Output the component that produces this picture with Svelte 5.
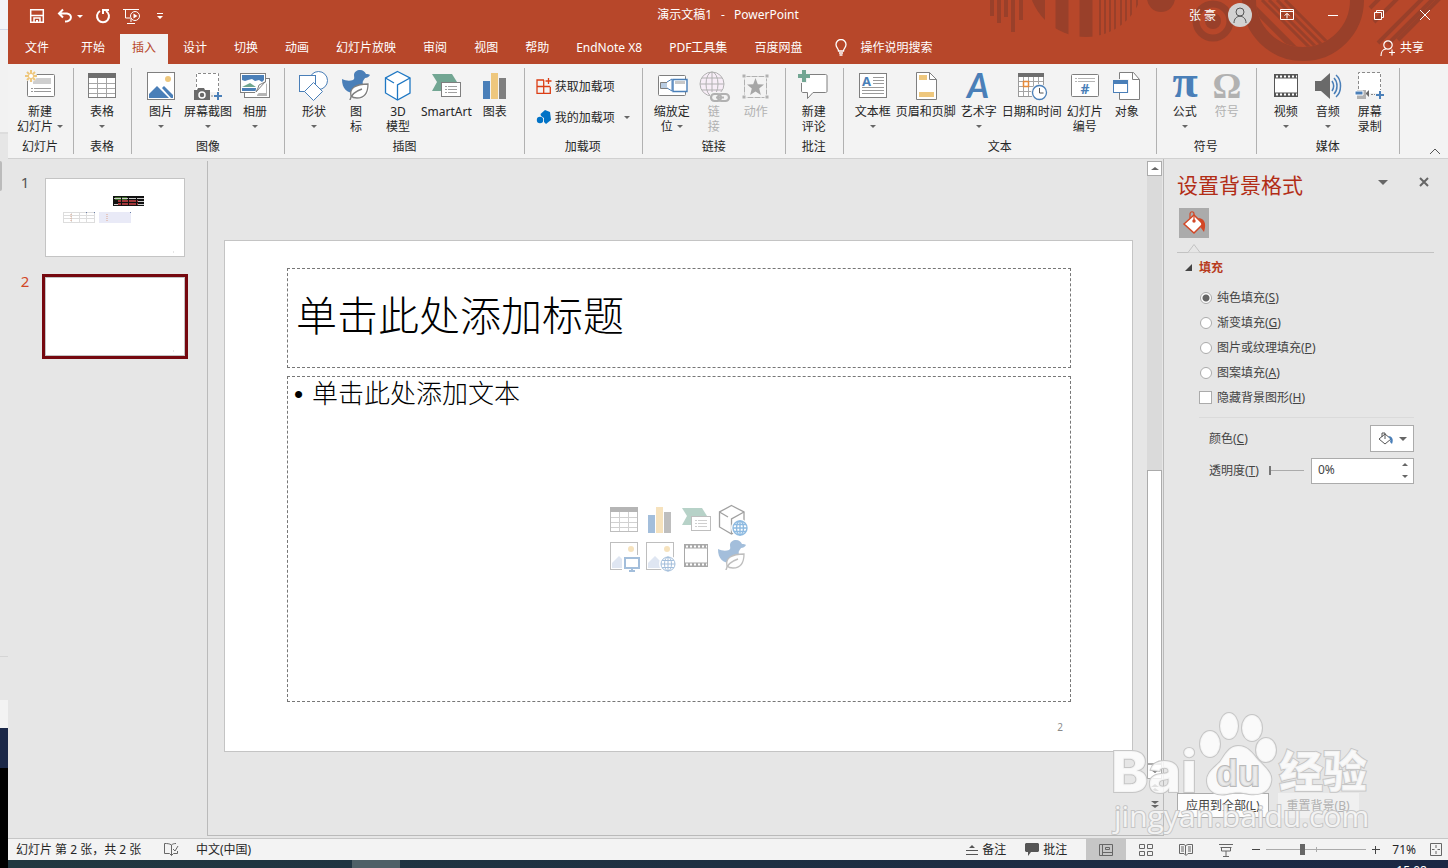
<script>
  const tabs = ['文件', '开始', '插入', '设计', '切换', '动画', '幻灯片放映', '审阅', '视图', '帮助', 'EndNote X8', 'PDF工具集', '百度网盘'];
  let activeTab = $state('插入');

  const groups = [
    { name: '幻灯片', items: [{ icon: 'newslide', lines: ['新建', '幻灯片'], drop: true }] },
    { name: '表格', items: [{ icon: 'table', lines: ['表格'], drop: true }] },
    {
      name: '图像',
      items: [
        { icon: 'picture', lines: ['图片'], drop: true },
        { icon: 'screenshot', lines: ['屏幕截图'], drop: true },
        { icon: 'album', lines: ['相册'], drop: true }
      ]
    },
    {
      name: '插图',
      items: [
        { icon: 'shapes', lines: ['形状'], drop: true },
        { icon: 'bird', lines: ['图', '标'] },
        { icon: 'cube', lines: ['3D', '模型'] },
        { icon: 'smartart', lines: ['SmartArt'] },
        { icon: 'chart', lines: ['图表'] }
      ]
    },
    { name: '加载项', addins: true, items: [] },
    {
      name: '链接',
      items: [
        { icon: 'zoom', lines: ['缩放定', '位'], drop: true },
        { icon: 'link', lines: ['链', '接'], disabled: true },
        { icon: 'action', lines: ['动作'], disabled: true }
      ]
    },
    { name: '批注', items: [{ icon: 'comment', lines: ['新建', '评论'] }] },
    {
      name: '文本',
      items: [
        { icon: 'textbox', lines: ['文本框'], drop: true },
        { icon: 'headerfooter', lines: ['页眉和页脚'] },
        { icon: 'wordart', lines: ['艺术字'], drop: true },
        { icon: 'date', lines: ['日期和时间'] },
        { icon: 'number', lines: ['幻灯片', '编号'] },
        { icon: 'object', lines: ['对象'] }
      ]
    },
    {
      name: '符号',
      items: [
        { icon: 'pi', lines: ['公式'], drop: true },
        { icon: 'omega', lines: ['符号'], disabled: true }
      ]
    },
    {
      name: '媒体',
      items: [
        { icon: 'video', lines: ['视频'], drop: true },
        { icon: 'audio', lines: ['音频'], drop: true },
        { icon: 'record', lines: ['屏幕', '录制'] }
      ]
    }
  ];

  const placeholders = [
    ['table', '插入表格'],
    ['chart', '插入图表'],
    ['smartart', '插入 SmartArt 图形'],
    ['cubeweb', '3D 模型'],
    ['picturepc', '图片'],
    ['pictureweb', '联机图片'],
    ['video', '插入视频'],
    ['bird', '插入图标']
  ];

  const fills = [
    { id: 'solid', label: '纯色填充', key: 'S' },
    { id: 'gradient', label: '渐变填充', key: 'G' },
    { id: 'picture', label: '图片或纹理填充', key: 'P' },
    { id: 'pattern', label: '图案填充', key: 'A' }
  ];
  let fill = $state('solid');
  let hideGraphics = $state(false);
  let transparency = $state(0);
  let zoomLevel = $state(71);
</script>

{#snippet globe(cx, cy, r)}
  <g transform="translate({cx} {cy})">
    <circle {r} />
    <ellipse rx={r / 2} ry={r} />
    <path d="M0 {-r}V{r}M{-r} 0H{r}M{-r * 0.85} {-r * 0.5}H{r * 0.85}M{-r * 0.85} {r * 0.5}H{r * 0.85}" />
  </g>
{/snippet}

{#snippet icon(name)}
  <svg class="icon" viewBox="0 0 32 32" width="32" height="32" fill="none" aria-hidden="true">
    {#if name === 'newslide'}
      <rect x="3.5" y="4.5" width="27" height="22" rx="1" fill="#fff" stroke="#7f7f7f" />
      <path d="M9 8h18v6H9z" fill="#cfcfcf" />
      <path d="M7 18.5h2M10 18.5h17M7 21.5h2M10 21.5h17" stroke="#999" />
      <circle cx="7" cy="6" r="6" fill="#f3f3f3" />
      <path d="M7 0v12M1 6h12M3 2l8 8M11 2l-8 8" stroke="#eec77d" stroke-width="2" />
      <circle cx="7" cy="6" r="2" fill="#fff" />
    {:else if name === 'table'}
      <rect x="2.5" y="3.5" width="27" height="24" fill="#fff" stroke="#7f7f7f" />
      <path d="M2 3h28v5H2z" fill="#6e6e6e" />
      <path d="M3 13.5h26M3 18.5h26M3 23.5h26M11.5 8v19M20.5 8v19" stroke="#a5a5a5" />
    {:else if name === 'picture'}
      <rect x="2.5" y="2.5" width="27" height="27" fill="#fff" stroke="#7f7f7f" />
      <path d="M4 28v-4l8-8 12 12z" fill="#4a7fb8" />
      <path d="M17 18l2-2 9 9v3h-2z" fill="#4a7fb8" />
      <circle cx="23" cy="9" r="3" fill="#eec77d" />
    {:else if name === 'picturepc' || name === 'pictureweb'}
      <rect x="2.5" y="2.5" width="27" height="27" fill="#fff" stroke="#7f7f7f" />
      <path d="M4 28v-5l7-7 12 12z" fill="#c0cfe6" />
      <circle cx="23" cy="9" r="3" fill="#eec77d" />
      {#if name === 'picturepc'}
        <path d="M14 15h20v17H14z" fill="#fff" />
        <rect x="17" y="18" width="14" height="10" fill="#fff" stroke="#4a7fb8" stroke-width="2" />
        <path d="M24 28v3M21 31h6" stroke="#4a7fb8" stroke-width="2" />
      {:else}
        <circle cx="24" cy="24" r="9" fill="#fff" />
        <g stroke="#4a7fb8">{@render globe(24, 24, 7)}</g>
      {/if}
    {:else if name === 'screenshot'}
      <path d="M4 3h23v19H4z" fill="#fff" />
      <path d="M4.500 17V3.500h22V21" stroke="#8a8a8a" stroke-dasharray="3 2" />
      <path d="M2 20h3l1-2h6l1 2h5v10H2z" fill="#6a6a6a" />
      <circle cx="10" cy="25" r="3" stroke="#fff" stroke-width="1.500" />
      <path d="M19 26h2" stroke="#8a8a8a" />
      <path d="M26 22v8M22 26h8" stroke="#4a7fb8" stroke-width="2" />
    {:else if name === 'album'}
      <rect x="5.500" y="8.500" width="25" height="19" fill="#fff" stroke="#7f7f7f" />
      <path d="M18 25l10-12v13H18z" fill="#b4b4b4" />
      <rect x="1.500" y="3.500" width="25" height="19" fill="#fff" stroke="#7f7f7f" />
      <path d="M3 5h22v5l-2 2-3-2-4 1-3-2-4 1-3 1-3-1z" fill="#4a7fb8" />
      <path d="M3 17l8-4 6 4z" fill="#6fa58e" />
      <path d="M3 18h14v3H3z" fill="#4a7fb8" />
      <path d="M16 23l1-4 10-7v11z" fill="#fff" />
      <path d="M17 22l9-10-6 3-1 3z" stroke="#7f7f7f" />
    {:else if name === 'shapes'}
      <circle cx="20.500" cy="10.500" r="9" fill="#fff" stroke="#4a7fb8" />
      <rect x="1.500" y="5.500" width="16" height="16" fill="#fff" stroke="#4a7fb8" />
      <path d="M15.500 12.500l9 9-9 9-9-9z" fill="#fff" stroke="#4a7fb8" />
    {:else if name === 'bird'}
      <path d="M2 9c4 2 8 2 11 1 2-1 1-3 1-5 0-3 3-5 6-5s5 2 6 4c2 0 3 0 4 1-1 2-3 3-5 3-1 2-3 3-2 6 1 5-3 9-8 9C7 23 2 19 2 9z" fill="#4a7fb8" />
      <path d="M10 30c-1-10 4-16 20-17 0 10-4 16-12 16-3 0-5-1-6-3z" fill="#fff" />
      <path d="M11 26c-2-8 5-12 17-12 0 9-4 14-11 14-3 0-5-1-6-2z" fill="#fff" stroke="#7f7f7f" stroke-width="1.300" />
      <path d="M10 30c1-6 6-9 12-11" stroke="#7f7f7f" stroke-width="1.500" />
    {:else if name === 'cube'}
      <path d="M15.500 1.500L28 8v15l-12.500 7L3.500 23V8z" fill="#fff" stroke="#1f78c4" stroke-width="1.300" />
      <path d="M3.500 8L12 13M28 8l-12.500 7v15" stroke="#1f78c4" stroke-width="1.300" />
    {:else if name === 'cubeweb'}
      <path d="M15.500 1.500L28 8v15l-12.500 7L3.500 23V8z" fill="#fff" stroke="#444" stroke-width="1.300" />
      <path d="M3.500 8L12 13M28 8l-12.500 7v15" stroke="#444" stroke-width="1.300" />
      <circle cx="24" cy="24" r="9" fill="#fff" />
      <g stroke="#1f78c4" stroke-width="1.400">{@render globe(24, 24, 7)}</g>
    {:else if name === 'smartart'}
      <path d="M2 4h20l5 8H12v9H2l5-9z" fill="#72a693" />
      <rect x="11.500" y="12.500" width="19" height="14" fill="#fff" stroke="#7f7f7f" />
      <path d="M15 16.500h2M18 16.500h9M15 19.500h2M18 19.500h9M15 22.500h2M18 22.500h9" stroke="#a0a0a0" />
    {:else if name === 'chart'}
      <path d="M4 11h7v18H4z" fill="#4a7fb8" />
      <path d="M12 3h7v26h-7z" fill="#eec77d" />
      <path d="M20 8h7v21h-7z" fill="#7f7f7f" />
    {:else if name === 'zoom'}
      <rect x="2.500" y="5.500" width="27" height="20" rx="1" fill="#fff" stroke="#7f7f7f" />
      <path d="M4.500 12.500h7v6h-7z" fill="#b9cde3" stroke="#7f7f7f" />
      <path d="M11 12l5-3v12l-5-3" fill="#fff" stroke="#4a7fb8" />
      <path d="M17 9.500h14v12H17z" fill="#fff" stroke="#4a7fb8" stroke-width="1.400" />
      <path d="M19 11h10v3H19z" fill="#c8c8c8" />
    {:else if name === 'link'}
      <circle cx="14" cy="14" r="12" fill="#f7edf7" />
      <g stroke="#b1b1b1">{@render globe(14, 14, 12)}</g>
      <path d="M12 22h20v10H12z" fill="#f3f3f3" />
      <rect x="13" y="24" width="10" height="7" rx="3.500" stroke="#b1b1b1" stroke-width="2.200" />
      <rect x="20" y="24" width="11" height="7" rx="3.500" stroke="#b1b1b1" stroke-width="2.200" />
      <path d="M18 27.500h8" stroke="#b1b1b1" stroke-width="2" />
    {:else if name === 'action'}
      <rect x="4.500" y="6.500" width="22" height="21" stroke="#b1b1b1" stroke-dasharray="6 1" />
      <path d="M2 4h4v4H2zM25 4h4v4h-4zM2 25h4v4H2zM25 25h4v4h-4z" fill="#b1b1b1" stroke="#f3f3f3" />
      <path d="M15.500 8l2.300 6.200 6.200.3-4.800 4 1.700 6.500-5.400-3.600-5.400 3.600 1.700-6.500-4.800-4 6.200-.3z" fill="#a6a6a6" />
    {:else if name === 'comment'}
      <path d="M3.500 5.500c0-.6.400-1 1-1h23c1 0 1.500.5 1.500 1.500v15c0 1-.5 1.500-1.500 1.500H15l-5.500 6v-6H5c-1 0-1.500-.5-1.500-1.500z" fill="#fff" stroke="#7f7f7f" />
      <path d="M-1-1h13v9.500H9V13H-1z" fill="#f3f3f3" />
      <path d="M6 0v12M0 6h12" stroke="#72a693" stroke-width="4" />
    {:else if name === 'textbox'}
      <rect x="2.500" y="3.500" width="27" height="24" fill="#fff" stroke="#7f7f7f" />
      <text x="5" y="16" font-size="13" font-weight="bold" fill="#4a7fb8">A</text>
      <path d="M16 7.500h11M16 10.500h11M16 13.500h11M5 17.500h22M5 20.500h22M5 23.500h22" stroke="#9a9a9a" />
    {:else if name === 'headerfooter'}
      <path d="M6.500 2.500h13l7 7v20h-20z" fill="#fff" stroke="#7f7f7f" />
      <path d="M19.500 2.500v7h7" stroke="#7f7f7f" />
      <path d="M9 5h8v5H9zM9 22h15v5H9z" fill="#eec77d" />
    {:else if name === 'wordart'}
      <text class="art" x="4" y="28" font-size="34" fill="#4a7fb8">A</text>
    {:else if name === 'date'}
      <rect x="2.500" y="3.500" width="25" height="23" fill="#fff" stroke="#9a9a9a" />
      <path d="M2 3h26v4H2z" fill="#6e6e6e" />
      <path d="M3 11.500h24M3 16.500h24M3 21.500h24M7.500 7v19M12.500 7v19M17.500 7v19M22.500 7v19" stroke="#a5a5a5" />
      <rect x="7.500" y="11.500" width="5" height="5" fill="#fff" stroke="#e58a3a" stroke-width="1.500" />
      <circle cx="23.500" cy="22.500" r="8.500" fill="#f3f3f3" />
      <circle cx="23.500" cy="22.500" r="7" fill="#fff" stroke="#4a7fb8" stroke-width="1.300" />
      <path d="M23.500 18v5h4" stroke="#555" />
    {:else if name === 'number'}
      <rect x="2.500" y="4.500" width="27" height="22" rx="1" fill="#fff" stroke="#7f7f7f" />
      <path d="M6 8.500h2M9 8.500h17M6 11.500h2M9 11.500h17" stroke="#b5b5b5" />
      <text x="11.500" y="24" font-size="14" font-weight="bold" fill="#4a7fb8">#</text>
    {:else if name === 'object'}
      <path d="M8.500 2.500h14l6 7v20h-20z" fill="#fff" stroke="#7f7f7f" />
      <path d="M21.500 2.500v7h7" stroke="#7f7f7f" />
      <path d="M1 9h17v14H1z" fill="#f3f3f3" />
      <path d="M2 10h15v13H2z" fill="#4a7fb8" />
      <path d="M3 14h13v8H3z" fill="#fff" />
    {:else if name === 'pi'}
      <text class="glyph" x="16" y="27" font-size="46" fill="#4a7fb8">π</text>
    {:else if name === 'omega'}
      <text class="glyph" x="16" y="28" font-size="36" fill="#b1b1b1">Ω</text>
    {:else if name === 'video'}
      <rect x="4.500" y="4.500" width="23" height="22" fill="#fff" stroke="#555" />
      <path d="M4 6.500h24M4 24.500h24" stroke="#555" stroke-width="4" />
      <path d="M6 6.500h21M6 24.500h21" stroke="#fff" stroke-width="2" stroke-dasharray="2 2" />
    {:else if name === 'audio'}
      <path d="M3 11h6l9-8v26l-9-8H3z" fill="#6a6a6a" />
      <path d="M20 11c2 3 2 7 0 10M22 8c4 4 4 12 0 16M24 5c6 5 6 17 0 22" stroke="#4a7fb8" stroke-width="1.500" />
    {:else if name === 'record'}
      <path d="M5 3h22v20H5z" fill="#fff" />
      <path d="M4.500 19V2.500h22V20" stroke="#8a8a8a" stroke-dasharray="3 2" />
      <path d="M3 20h9v9H3z" fill="#b1b1b1" />
      <path d="M1 21h8v4H1z" fill="#4a7fb8" stroke="#fff" />
      <path d="M12 23l3-3v7l-3-3z" fill="#6a6a6a" />
      <path d="M17 24.500h4" stroke="#8a8a8a" stroke-dasharray="2 1" />
      <path d="M26 21v8M22 25h8" stroke="#4a7fb8" stroke-width="2" />
    {/if}
  </svg>
{/snippet}

<svelte:head>
  <title>演示文稿1 - PowerPoint</title>
</svelte:head>

<div class="desktop">
  <div class="behind"></div>

  <div class="app">
    <header>
      <svg class="pattern" width="460" height="64" viewBox="988 0 460 64" fill="none" aria-hidden="true">
        <defs>
          <clipPath id="disc"><circle cx="1086" cy="-21" r="58" /></clipPath>
          <clipPath id="ring"><circle cx="1303" cy="0" r="47" /></clipPath>
        </defs>
        <path d="M992 0v16M999 0v23M1006 0v17M1013 0v32M1021 0v20" stroke="#99402a" stroke-width="4" />
        <g clip-path="url(#disc)" stroke="#99402a">
          <path d="M1034-10v40" stroke-width="22" />
          <path d="M1062 0v40M1086 0v40" stroke-width="13" />
          <path d="M1100 0v40M1105 0v40M1110 0v40M1115 0v40M1121 0v40M1126 0v40M1131 0v40M1137 0v40" stroke-width="2" />
        </g>
        <circle cx="1161" cy="-2" r="14" fill="#99402a" />
        <circle cx="1213" cy="21" r="17" stroke="#99402a" stroke-width="7" />
        <circle cx="1213" cy="21" r="8" fill="#99402a" />
        <circle cx="1303" cy="0" r="54" stroke="#99402a" stroke-width="14" />
        <g clip-path="url(#ring)" stroke="#99402a">
          <path d="M1250 4l60 60" stroke-width="6" />
          <path d="M1262 0l60 60M1269 0l60 60M1277 0l60 60M1285 0l60 60" stroke-width="3" />
        </g>
        <path d="M1370 8l20-20M1374 22l28-28M1378 43l46-46M1388 44l48-48M1398 40l48-48" stroke="#99402a" stroke-width="4" />
      </svg>

      <div class="titlebar">
        <div class="quick">
          <button aria-label="保存">
            <svg width="16" height="16" viewBox="0 0 16 16" fill="none" stroke="#fff" stroke-width="1.500"><path d="M1.700 1.700h12.600v12.600H1.700zM2 7.500h12M5 14v-4h6v4" /><path d="M7 12h2v2H7z" fill="#fff" stroke="none" /></svg>
          </button>
          <button class="split" aria-label="撤消">
            <svg width="16" height="16" viewBox="0 0 16 16" fill="none" stroke="#fff" stroke-width="2"><path d="M6 1.500L2 5.500l4 4M2 5.500h8c6 1 5 8-2 8" /></svg>
            <i class="caret"></i>
          </button>
          <button aria-label="重复">
            <svg width="16" height="16" viewBox="0 0 16 16" fill="none" stroke="#fff" stroke-width="2"><path d="M5 3a6 6 0 1 0 6 0M8 6V2h6" /></svg>
          </button>
          <button aria-label="从头开始">
            <svg width="18" height="16" viewBox="0 0 18 16" fill="none" stroke="#fff"><path d="M0 1.500h16M2.500 2v8H7M8 10v4M4 15.500h8" /><circle cx="12" cy="8" r="4.500" /><path d="M10.500 5.500l4 2.500-4 2.500z" fill="#fff" stroke="none" /></svg>
          </button>
          <button aria-label="自定义快速访问工具栏">
            <svg width="6" height="8" viewBox="0 0 6 8"><path d="M0 1h6v1H0zM0 4h6L3 7z" fill="#fff" /></svg>
          </button>
        </div>
        <h1><span>演示文稿1</span><span>-</span><span>PowerPoint</span></h1>
        <div class="window">
          <span>张 豪</span>
          <svg class="avatar" width="24" height="24" viewBox="0 0 24 24" fill="none" stroke="#555"><circle cx="12" cy="12" r="12" fill="#d2d2d2" stroke="none" /><circle cx="12" cy="9" r="4" /><path d="M6 20c0-9 12-9 12 0" /></svg>
          <button aria-label="功能区显示选项">
            <svg width="14" height="12" viewBox="0 0 14 12" fill="none" stroke="#fff"><path d="M.5.500h13v10H.5zM1 2.500h12M7 9.500v-5M4.500 6.500L7 4.500l2.500 2" /></svg>
          </button>
          <button aria-label="最小化">
            <svg width="10" height="10" viewBox="0 0 10 10" stroke="#fff"><path d="M0 5.500h10" /></svg>
          </button>
          <button aria-label="还原">
            <svg width="10" height="10" viewBox="0 0 10 10" fill="none" stroke="#fff"><path d="M.5 2.500h7v7h-7zM2.500 2V.500h7v7H8" /></svg>
          </button>
          <button aria-label="关闭">
            <svg width="10" height="10" viewBox="0 0 10 10" stroke="#fff"><path d="M0 0l10 10M10 0L0 10" /></svg>
          </button>
        </div>
      </div>

      <nav>
        {#each tabs as tab}
          <button class="tab" class:active={tab === activeTab} onclick={() => (activeTab = tab)}>{tab}</button>
        {/each}
        <button class="tellme">
          <svg width="12" height="17" viewBox="0 0 12 17" fill="none" stroke="#fff" stroke-width="1.300"><path d="M3.500 12c0-3-2.500-3-2.500-6.500a5 5 0 0 1 10 0C11 9 8.500 9 8.500 12zM4 14h4M4.500 16h3" /></svg>
          操作说明搜索
        </button>
        <button class="share">
          <svg width="16" height="16" viewBox="0 0 16 16" fill="none" stroke="#fff" stroke-width="1.200"><circle cx="8" cy="5" r="4.200" /><path d="M1 16c0-4 2-7 5-7M12 9.500v6M9 12.500h6" /></svg>
          共享
        </button>
      </nav>
    </header>

    <section class="ribbon">
      {#each groups as group}
        <div class="group" class:wide={group.items.length > 2}>
          {#if group.addins}
            <div class="addins">
              <button>
                <svg width="16" height="16" viewBox="0 0 16 16" fill="none" stroke="#dc3e15" stroke-width="1.300"><path d="M8 2H1v13.300h13.300V9M1 8.500h13.300M7.700 2v13M12.500 0v6M9.500 3h6" /></svg>
                获取加载项
              </button>
              <button>
                <svg width="16" height="16" viewBox="0 0 16 16" fill="#0072c6"><path d="M4.500 5L9 1l5 2 1 8-5 4-2-2V9L5 7z" /><circle cx="4" cy="11" r="3.200" /></svg>
                我的加载项
                <i class="caret"></i>
              </button>
            </div>
          {:else}
            <div class="items">
              {#each group.items as item}
                <button class="item" disabled={item.disabled}>
                  {@render icon(item.icon)}
                  <span>{item.lines[0]}</span>
                  <span>{item.lines[1] ?? ''}{#if item.drop}<i class="caret" class:after={item.lines[1]}></i>{/if}</span>
                </button>
              {/each}
            </div>
          {/if}
          <div class="group-name">{group.name}</div>
        </div>
      {/each}
      <button class="collapse" aria-label="折叠功能区">
        <svg width="12" height="7" viewBox="0 0 12 7" fill="none" stroke="#555"><path d="M1 6l5-5 5 5" /></svg>
      </button>
    </section>

    <main>
      <aside class="thumbs">
        <div class="thumb">
          <span>1</span>
          <button aria-label="幻灯片 1">
            <svg width="138" height="77" viewBox="46 179 138 77">
              <path d="M113 196h31v10h-31z" fill="#111" />
              <path d="M115 197h12v3h-12z" fill="#3d6a28" />
              <path d="M118 200h20v5h-20z" fill="#a3373a" />
              <path d="M114 198.500h30M138 201.500h6M138 204.500h6M114 204.500h4" stroke="#ccc" />
              <path d="M113 202.500h31M121.500 196v10M128.500 196v10M136.500 196v10" stroke="#111" />
              <path d="M63 212.500h32M63 215.500h32M63 218.500h32M63 222.500h32M63.500 212v10M71.500 212v10M79.500 212v10M86.500 212v10M94.500 212v10" stroke="#ddd" fill="none" />
              <path d="M99 212h32v11H99z" fill="#e9eaf7" />
              <path d="M71 214v8M107 214v8" stroke="#dda58c" stroke-dasharray="1 1" />
              <path d="M94 212.500h1M130 212.500h1M86 212.500h1" stroke="#6c7fa8" />
              <path d="M173 252h1" stroke="#ccc" />
            </svg>
          </button>
        </div>
        <div class="thumb selected">
          <span>2</span>
          <button aria-label="幻灯片 2">
            <svg width="138" height="77" viewBox="46 179 138 77"><path d="M173 252h1" stroke="#ccc" /></svg>
          </button>
        </div>
      </aside>

      <div class="editor">
        <div class="canvas">
          <article class="slide">
            <h2 class="holder">单击此处添加标题</h2>
            <div class="holder body">
              <ul><li>单击此处添加文本</li></ul>
              <div class="inserts">
                {#each placeholders as [name, label]}
                  <button aria-label={label}>{@render icon(name)}</button>
                {/each}
              </div>
            </div>
            <footer>2</footer>
          </article>
        </div>
        <div class="scroll">
          <button class="boxed" aria-label="向上滚动"><i class="caret up"></i></button>
          <div class="track"><div class="grip"></div></div>
          <button class="boxed" aria-label="向下滚动"><i class="caret"></i></button>
          <button class="jump" aria-label="上一张幻灯片"><i class="caret up"></i><i class="caret up"></i></button>
          <button class="jump" aria-label="下一张幻灯片"><i class="caret"></i><i class="caret"></i></button>
        </div>
      </div>

      <aside class="pane">
        <div class="pane-head">
          <h2>设置背景格式</h2>
          <button aria-label="任务窗格选项"><i class="caret big"></i></button>
          <button aria-label="关闭窗格">
            <svg width="10" height="10" viewBox="0 0 10 10" stroke="#666" stroke-width="2"><path d="M1 1l8 8M9 1L1 9" /></svg>
          </button>
        </div>
        <button class="bucket" aria-label="填充">
          <svg width="26" height="26" viewBox="0 0 26 26" fill="none"><path d="M3 14l10-9 9 9-9 9z" fill="#fff" stroke="#d24726" stroke-width="1.500" /><path d="M9 8V4c0-3 4-3 4 0v7" stroke="#d24726" stroke-width="1.200" /><circle cx="13" cy="11" r="1.700" fill="#d24726" /><path d="M17 8c6 0 9 5 6 14l-3-4c1-4 0-7-3-10z" fill="#d24726" /></svg>
        </button>
        <div class="rule">
          <svg width="14" height="9" viewBox="0 0 14 9" fill="#e6e6e6" stroke="#c2c2c2"><path d="M0 8.500h1l6-8 6 8h1" /></svg>
        </div>
        <h3><svg width="7" height="7" viewBox="0 0 7 7"><path d="M7 0v7H0z" fill="#444" /></svg>填充</h3>
        <div class="options">
          {#each fills as option}
            <label><input type="radio" name="fill" value={option.id} bind:group={fill} /><span>{option.label}(<u>{option.key}</u>)</span></label>
          {/each}
          <label><input type="checkbox" bind:checked={hideGraphics} /><span>隐藏背景图形(<u>H</u>)</span></label>
        </div>
        <div class="settings">
          <div class="row">
            <span>颜色(<u>C</u>)</span>
            <button class="color" aria-label="颜色">
              <svg width="16" height="14" viewBox="0 0 16 14" fill="none"><path d="M1 7l6-5 6 5-6 5zM4 5V1h3v6" stroke="#555" fill="#fff" /><path d="M10 4c4 0 6 3 4 8l-2-2c1-2 0-4-2-6z" fill="#4a7fb8" /></svg>
              <i class="caret big"></i>
            </button>
          </div>
          <div class="row">
            <label for="transparency">透明度(<u>T</u>)</label>
            <input id="transparency" class="slider" type="range" min="0" max="100" bind:value={transparency} />
            <div class="spin">
              <input type="text" aria-label="透明度百分比" value="{transparency}%" />
              <div>
                <button aria-label="增加" onclick={() => (transparency = Math.min(100, transparency + 1))}><i class="caret up"></i></button>
                <button aria-label="减少" onclick={() => (transparency = Math.max(0, transparency - 1))}><i class="caret"></i></button>
              </div>
            </div>
          </div>
        </div>
        <div class="actions">
          <button>应用到全部(<u>L</u>)</button>
          <button disabled>重置背景(<u>B</u>)</button>
        </div>
      </aside>
    </main>

    <div class="status">
      <span class="count">幻灯片 第 2 张，共 2 张</span>
      <button aria-label="拼写检查">
        <svg width="15" height="13" viewBox="0 0 15 13" fill="none" stroke="#666"><path d="M7.500 2v10.500M7.500 2C5.500.500 3 .500.500.500v10h5l2 2 2-2h4V8M7.500 2C8.500 1 10 .500 12 .500M9 6l2 2 3-5" /></svg>
      </button>
      <span>中文(中国)</span>
      <div class="status-right">
        <button>
          <svg width="12" height="12" viewBox="0 0 12 12" fill="#555"><path d="M0 6h12v1H0zM0 10h12v1H0zM3 4h6L6 1z" /></svg>
          备注
        </button>
        <button>
          <svg width="14" height="13" viewBox="0 0 14 13" fill="#555"><path d="M1 0h12l1 1v7l-1 1H6l-3 4V9H1L0 8V1z" /></svg>
          批注
        </button>
        <div class="views">
          <button class="on" aria-label="普通视图">
            <svg width="14" height="14" viewBox="0 0 14 14" fill="none" stroke="#666"><path d="M.500 1.500h13v11H.500zM3.500 2v10M4 9.500h9M6.500 4.500h4v2h-4z" /></svg>
          </button>
          <button aria-label="幻灯片浏览">
            <svg width="14" height="14" viewBox="0 0 14 14" fill="none" stroke="#666"><path d="M.500 1.500h5v4h-5zM8.500 1.500h5v4h-5zM.500 8.500h5v4h-5zM8.500 8.500h5v4h-5z" /></svg>
          </button>
          <button aria-label="阅读视图">
            <svg width="14" height="14" viewBox="0 0 14 14" fill="none" stroke="#666"><path d="M6.500 2.500L5 1.500H.500v9H5l2 2 2-2h4.500v-9H9L6.500 2.500v9M2 4h3M2 6h3M2 8h3M9 4h3M9 6h3M9 8h3" /></svg>
          </button>
          <button aria-label="幻灯片放映">
            <svg width="14" height="14" viewBox="0 0 14 14" fill="none" stroke="#666"><path d="M0 1.500h14M1.500 4.500h11M2.500 4v4h9V4M7 8v5M4 13.500h6" /></svg>
          </button>
        </div>
        <button class="step" aria-label="缩小" onclick={() => (zoomLevel -= 1)}><svg width="8" height="8" viewBox="0 0 8 8" stroke="#444"><path d="M0 3.500h8" /></svg></button>
        <input class="zoom" type="range" aria-label="缩放" min="10" max="184" bind:value={zoomLevel} />
        <button class="step" aria-label="放大" onclick={() => (zoomLevel += 1)}><svg width="8" height="8" viewBox="0 0 8 8" stroke="#444"><path d="M0 3.500h8M3.500 0v8" /></svg></button>
        <span class="percent">{zoomLevel}%</span>
        <button aria-label="使幻灯片适应当前窗口">
          <svg width="12" height="13" viewBox="0 0 12 13" fill="none" stroke="#666"><path d="M.500 4V.500H11.500v12H.500V4M6 2v3M6 11V8M2 6.500h2.500M10 6.500H7.500" /></svg>
        </button>
      </div>
    </div>

    <div class="taskbar"><i></i><span>15:08</span></div>
  </div>

  <svg class="mark" width="264" height="124" viewBox="0 0 264 124" aria-hidden="true">
    <g fill="#fff" fill-opacity="0.8" stroke="#c6c6c6" stroke-width="2" paint-order="stroke">
      <text class="latin" x="0" y="81" font-size="56">Bai</text>
      <ellipse cx="99" cy="33" rx="10" ry="13" />
      <ellipse cx="118" cy="15" rx="9" ry="13" />
      <ellipse cx="141" cy="17" rx="10" ry="13" />
      <ellipse cx="155" cy="39" rx="10" ry="12" />
      <path d="M127 35c10 0 14 7 20 14 8 8 15 14 13 22-2 12-14 13-22 12-8-2-14-2-22 0-10 2-19-2-20-12-1-9 7-14 13-20 5-7 9-16 18-16z" />
      <text x="105" y="75" font-size="36" font-weight="bold" fill="#e8e8e8" stroke="#b8b8b8">du</text>
      <text class="cjk" x="168" y="77" font-size="44">经验</text>
      <text class="url" x="3" y="116" font-size="30">jingyan.baidu.com</text>
    </g>
  </svg>
</div>

<style>
  :global(body) {
    margin: 0;
  }
  .desktop {
    position: relative;
    display: grid;
    grid-template-columns: 8px 1fr;
    height: 100vh;
    overflow: hidden;
    font: 12px/15px "Noto Sans", "Noto Sans CJK SC", sans-serif;
    color: #262626;
  }
  .behind {
    background: linear-gradient(#f3f4f9 29px, #d3d8e8 29px 30px, #f2f2f2 30px 132px, #ddd 132px 134px, #e6e6e6 134px 656px, #d5d5d5 656px 657px, #e6e6e6 657px 700px, #f3f3f3 700px 728px, #1b2848 728px 768px, #000 768px);
  }
  .behind::before {
    content: "";
    display: block;
    width: 2px;
    height: 30px;
    margin-top: 161px;
    background: #bbb;
    border-radius: 0 2px 2px 0;
  }
  .app {
    display: flex;
    flex-direction: column;
    min-width: 0;
    min-height: 0;
    background: #e6e6e6;
  }
  button {
    display: flex;
    align-items: center;
    justify-content: center;
    padding: 0;
    border: 0;
    background: none;
    font: inherit;
    color: inherit;
    white-space: nowrap;
  }
  svg {
    flex: none;
    display: block;
  }
  h1,
  h2,
  h3,
  ul {
    margin: 0;
    padding: 0;
    font: inherit;
  }
  .icon {
    overflow: visible;
  }
  .caret {
    display: inline-block;
    vertical-align: 3px;
    border: 3px solid transparent;
    border-top-color: #666;
    border-bottom: 0;
  }
  .caret.after {
    margin-left: 4px;
  }
  .caret.up {
    border-top: 0;
    border-bottom: 3px solid #666;
  }
  .caret.big {
    border-width: 5px 5px 0;
  }
  .glyph {
    font-family: "Liberation Serif", serif;
    font-weight: bold;
    text-anchor: middle;
  }
  .art {
    font-family: Lato, sans-serif;
    font-weight: bold;
    font-style: italic;
  }

  /* title bar and tabs */
  header {
    position: relative;
    background: #b7472a;
    color: #fff;
  }
  .pattern {
    position: absolute;
    top: 0;
    right: 0;
  }
  .titlebar {
    position: relative;
    display: grid;
    grid-template-columns: 1fr auto 1fr;
    height: 34px;
  }
  .titlebar h1 {
    display: flex;
    gap: 9px;
    line-height: 30px;
  }
  .quick {
    display: flex;
    align-items: center;
    gap: 12px;
    padding: 0 0 2px 21px;
  }
  .quick .split {
    gap: 4px;
  }
  .quick .caret {
    border-top-color: #fff;
  }
  .quick button:last-child {
    margin-left: 4px;
  }
  .window {
    display: flex;
    justify-content: flex-end;
    align-items: center;
    height: 30px;
  }
  .window button {
    width: 46px;
    height: 30px;
  }
  .avatar {
    margin: 0 12px;
  }
  nav {
    position: relative;
    display: flex;
    gap: 3px;
    height: 30px;
  }
  nav button {
    padding: 0 0 3px;
  }
  .tab {
    padding: 0 12px 3px;
  }
  .tab:first-child {
    padding: 0 17px 3px;
  }
  .tab.active {
    background: #f3f3f3;
    color: #b7472a;
  }
  .tellme {
    gap: 13px;
    margin-left: 18px;
  }
  .share {
    gap: 4px;
    margin: 0 24px 0 auto;
  }

  /* ribbon */
  .ribbon {
    display: flex;
    height: 94px;
    background: #f3f3f3;
    border-bottom: 1px solid #d0d0d0;
  }
  .group {
    display: flex;
    flex-direction: column;
    padding: 2px 8px 0 7px;
    margin: 4px 0;
    border-right: 1px solid #b1b1b1;
  }
  .group.wide {
    padding-left: 8px;
  }
  .items {
    flex: none;
    display: flex;
    height: 69px;
  }
  .item {
    flex-direction: column;
    justify-content: flex-start;
    min-width: 42px;
    padding: 0 2px;
  }
  .item span {
    height: 15px;
  }
  .item .icon {
    margin-bottom: 2px;
  }
  .item:disabled {
    color: #b1b1b1;
  }
  .addins {
    flex: none;
    display: flex;
    flex-direction: column;
    gap: 15px;
    width: 102px;
    height: 61px;
    padding-top: 8px;
  }
  .addins button {
    justify-content: flex-start;
    gap: 3px;
    padding-left: 4px;
  }
  .addins .caret {
    margin-left: 6px;
  }
  .group-name {
    text-align: center;
    line-height: 16px;
  }
  .collapse {
    align-self: flex-end;
    margin: 0 7px 3px auto;
  }

  /* work area */
  main {
    flex: 1;
    display: flex;
    min-height: 0;
  }
  .thumbs {
    display: flex;
    flex-direction: column;
    gap: 14px;
    width: 200px;
    margin: 2px 0;
    padding-top: 14px;
    box-sizing: border-box;
    border-right: 1px solid #bababa;
  }
  .thumb {
    display: flex;
    gap: 12px;
    padding-left: 12px;
    font-size: 15px;
    line-height: 14px;
    color: #555;
  }
  .thumb span {
    width: 10px;
    text-align: center;
  }
  .thumb button {
    margin: 0;
    border: 3px solid transparent;
  }
  .thumb svg {
    background: #fff;
    border: 1px solid #c4c4c4;
  }
  .selected {
    color: #d24726;
  }
  .selected button {
    border-color: #75080f;
  }
  .editor {
    flex: 1;
    display: flex;
    min-width: 0;
    margin-bottom: 2px;
    border-right: 1px solid #bababa;
    border-bottom: 1px solid #bababa;
  }
  .canvas {
    flex: 1;
    display: flex;
    align-items: center;
    padding: 0 14px 2px 16px;
  }
  .slide {
    flex: 1;
    display: flex;
    flex-direction: column;
    gap: 8px;
    box-sizing: border-box;
    aspect-ratio: 16 / 9;
    padding: 27px 61px 0 62px;
    background: #fff;
    border: 1px solid #c4c4c4;
    color: #000;
  }
  .holder {
    border: 1px dashed #777;
  }
  h2.holder {
    padding: 14px 8px 24px;
    font-size: 41px;
    line-height: 60px;
    font-weight: 300;
    font-family: "Noto Sans CJK SC", sans-serif;
  }
  .body {
    flex: 1;
    display: grid;
  }
  .body ul {
    grid-area: 1 / 1;
    padding: 0 0 0 24px;
    font: 300 26px/30px "Noto Sans CJK SC", sans-serif;
    list-style: none;
  }
  .body li::before {
    content: "•";
    display: inline-block;
    width: 18px;
    margin-left: -18px;
    font-family: "Liberation Sans", sans-serif;
  }
  .inserts {
    grid-area: 1 / 1;
    place-self: center;
    display: grid;
    grid-template-columns: repeat(4, 32px);
    gap: 4px;
    padding: 0 2px 2px 0;
    opacity: 0.5;
  }
  .slide footer {
    height: 41px;
    padding-right: 8px;
    font-size: 10px;
    line-height: 34px;
    text-align: right;
    color: #8a8a8a;
  }
  .scroll {
    display: flex;
    flex-direction: column;
    width: 15px;
    margin: 2px 1px 22px 0;
  }
  .boxed {
    height: 15px;
    background: #fff;
    border: 1px solid #ababab;
  }
  .boxed .caret {
    border-left-width: 4px;
    border-right-width: 4px;
  }
  .track {
    flex: 1;
    display: flex;
    align-items: flex-end;
    background: #dadada;
  }
  .grip {
    flex: 1;
    height: 50%;
    box-sizing: border-box;
    background: #fff;
    border: 1px solid #ababab;
  }
  .jump {
    flex-direction: column;
    gap: 1px;
    height: 17px;
  }
  .jump .caret {
    border-left-width: 4px;
    border-right-width: 4px;
  }

  /* format pane */
  .pane {
    display: flex;
    flex-direction: column;
    width: 284px;
    box-sizing: border-box;
    padding: 12px 14px 20px 13px;
    color: #444;
  }
  .pane-head {
    display: flex;
    align-items: center;
    margin-bottom: 9px;
  }
  .pane-head h2 {
    flex: 1;
    font-size: 21px;
    line-height: 28px;
    color: #b22d16;
  }
  .pane-head button {
    width: 10px;
    margin: 0 5px 6px 26px;
  }
  .bucket {
    width: 30px;
    height: 30px;
    margin-left: 2px;
    background: #ababab;
  }
  .rule {
    height: 14px;
    padding-left: 10px;
    border-bottom: 1px solid #c2c2c2;
  }
  .rule svg {
    margin-top: 6px;
    position: relative;
  }
  .pane h3 {
    display: flex;
    align-items: center;
    gap: 7px;
    margin: 7px 0 10px 8px;
    font-weight: bold;
    color: #b83b1d;
  }
  .options {
    margin-left: 22px;
    padding-bottom: 7px;
    margin-right: 20px;
    border-bottom: 1px solid #dadada;
  }
  .options label {
    display: flex;
    align-items: center;
    gap: 5px;
    height: 25px;
  }
  .options input {
    appearance: none;
    width: 13px;
    height: 13px;
    box-sizing: border-box;
    margin: 0;
    background: #fff;
    border: 1px solid #ababab;
  }
  .options input[type="radio"] {
    width: 12px;
    height: 12px;
    margin-left: 1px;
    border-radius: 50%;
  }
  .options input[type="radio"]:checked {
    background: radial-gradient(#666 3px, #fff 4px);
  }
  .settings {
    display: flex;
    flex-direction: column;
    gap: 5px;
    margin: 7px 20px auto 32px;
  }
  .row {
    display: flex;
    align-items: center;
    justify-content: space-between;
    height: 27px;
  }
  .color {
    gap: 5px;
    width: 44px;
    height: 27px;
    background: #fff;
    border: 1px solid #ababab;
  }
  .color .caret {
    border-width: 4px 4px 0;
  }
  .slider,
  .zoom {
    appearance: none;
    height: 9px;
    margin: 0;
    background: linear-gradient(#ababab, #ababab) center / 100% 1px no-repeat;
  }
  .slider {
    width: 35px;
    margin-left: 4px;
  }
  .slider::-webkit-slider-thumb {
    appearance: none;
    width: 2px;
    height: 9px;
    background: #777;
  }
  .spin {
    display: flex;
    width: 101px;
    height: 24px;
    background: #fff;
    border: 1px solid #ababab;
  }
  .spin input {
    flex: 1;
    min-width: 0;
    padding: 0 6px 2px;
    border: 0;
    font: inherit;
    color: inherit;
  }
  .spin div {
    display: flex;
    flex-direction: column;
    width: 16px;
  }
  .spin button {
    flex: 1;
  }
  .actions {
    display: flex;
    gap: 9px;
  }
  .actions button {
    height: 25px;
    padding: 0 8px;
    background: #fdfdfd;
    border: 1px solid #ababab;
  }
  .actions button:disabled {
    background: #f0f0f0;
    border-color: #f0f0f0;
    color: #b1b1b1;
  }

  /* status bar */
  .status {
    display: flex;
    align-items: center;
    gap: 17px;
    height: 21px;
    padding: 0 6px 0 8px;
    background: #f3f3f3;
    border-top: 1px solid #c6c6c6;
  }
  .count {
    min-width: 131px;
  }
  .status-right {
    display: flex;
    align-items: center;
    height: 21px;
    margin-left: auto;
  }
  .status-right > button {
    gap: 4px;
    margin-right: 19px;
  }
  .views {
    display: flex;
    height: 21px;
  }
  .views button {
    width: 40px;
  }
  .views .on {
    background: #c6c6c6;
  }
  .status-right .step {
    margin: 0 6px;
  }
  .zoom {
    width: 100px;
    background:
      linear-gradient(#ababab, #ababab) center / 1px 5px no-repeat,
      linear-gradient(#ababab, #ababab) center / 100% 1px no-repeat;
  }
  .zoom::-webkit-slider-thumb {
    appearance: none;
    width: 5px;
    height: 11px;
    background: #666;
  }
  .percent {
    margin: 0 14px 0 6px;
  }
  .status-right > button:last-child {
    margin: 0;
  }
  .taskbar {
    display: flex;
    justify-content: space-between;
    height: 8px;
    padding: 0 21px 0 344px;
    overflow: hidden;
    background: linear-gradient(90deg, #213840, #1b2744);
    color: #fff;
  }
  .taskbar i {
    width: 48px;
    background: #4f6067;
  }
  .taskbar span {
    padding-top: 3px;
  }
  .mark {
    position: absolute;
    right: 73px;
    bottom: 33px;
    font-family: "Liberation Sans", sans-serif;
    pointer-events: none;
  }
  .mark .latin {
    font-family: Inter, sans-serif;
    font-weight: 800;
  }
  .mark .cjk {
    font-family: "Noto Sans CJK SC", sans-serif;
    font-weight: 900;
  }
  .mark .url {
    font-family: "Open Sans", sans-serif;
  }
</style>
